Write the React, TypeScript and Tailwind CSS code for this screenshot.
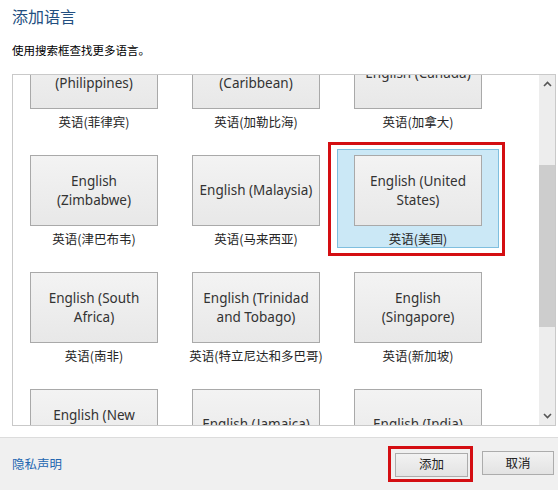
import React from "react";

type Lang = { lines: string[]; label: string; selected?: boolean };

const rows: Lang[][] = [
  [
    { lines: ["English", "(Philippines)"], label: "英语(菲律宾)" },
    { lines: ["English", "(Caribbean)"], label: "英语(加勒比海)" },
    { lines: ["English (Canada)"], label: "英语(加拿大)" },
  ],
  [
    { lines: ["English", "(Zimbabwe)"], label: "英语(津巴布韦)" },
    { lines: ["English (Malaysia)"], label: "英语(马来西亚)" },
    { lines: ["English (United", "States)"], label: "英语(美国)", selected: true },
  ],
  [
    { lines: ["English (South", "Africa)"], label: "英语(南非)" },
    { lines: ["English (Trinidad", "and Tobago)"], label: "英语(特立尼达和多巴哥)" },
    { lines: ["English", "(Singapore)"], label: "英语(新加坡)" },
  ],
  [
    { lines: ["English (New", "Zealand)"], label: "英语(新西兰)" },
    { lines: ["English (Jamaica)"], label: "英语(牙买加)" },
    { lines: ["English (India)"], label: "英语(印度)" },
  ],
];

const font = { fontFamily: '"Segoe UI", "Noto Sans", "Noto Sans CJK SC", sans-serif' };
const cjk = { fontFamily: '"Noto Sans CJK SC", sans-serif' };

const LangCell = ({ item }: { item: Lang }) => (
  <div
    className={
      "relative flex h-[99px] w-[162px] flex-col items-center pt-[5px] " +
      (item.selected ? "border border-[#7fbfdf] bg-[#cbe8f6] pt-[4px]" : "border border-transparent")
    }
  >
    <div className="flex h-[72px] w-[128px] flex-col items-center justify-center border border-[#a9a9a9] bg-gradient-to-b from-[#f3f3f3] to-[#e8e8e8] text-[13.5px] leading-[19px] text-[#333]">
      {item.lines.map((l) => (
        <span key={l}>{l}</span>
      ))}
    </div>
    <div className="pt-[5px] text-[12.5px] leading-[16px] text-[#262626]" style={cjk}>
      {item.label}
    </div>
    {item.selected && (
      <div className="pointer-events-none absolute left-[-10px] right-[-7px] top-[-8px] bottom-[-9px] border-[3px] border-[#d40e12]" />
    )}
  </div>
);

export default function App() {
  return (
    <div className="relative flex h-[490px] w-[558px] flex-col bg-white" style={font}>
      <h1 className="pl-3 pt-[5px] text-[16px] leading-[22px] text-[#234f80]" style={cjk}>
        添加语言
      </h1>
      <p className="pl-3 pt-[15px] text-[11.5px] leading-[16px] text-black" style={cjk}>
        使用搜索框查找更多语言。
      </p>

      <div className="ml-3 mt-[16px] flex h-[352px] w-[544px] border border-[#c9c9c9]">
        <div className="flex-1 overflow-hidden">
          <div className="mt-[-43px] flex flex-col gap-[18px]">
            {rows.map((r, i) => (
              <div key={i} className="flex">
                {r.map((item) => (
                  <LangCell key={item.label} item={item} />
                ))}
              </div>
            ))}
          </div>
        </div>
        <div className="flex w-[16px] flex-col bg-[#ededed]">
          <div className="flex h-[18px] items-center justify-center">
            <svg width="9" height="6" viewBox="0 0 9 6">
              <path d="M1 5 L4.5 1.5 L8 5" fill="none" stroke="#555" strokeWidth="1.6" />
            </svg>
          </div>
          <div className="mt-[72px] h-[162px] bg-[#cdcdcd]" />
          <div className="flex-1" />
          <div className="flex h-[18px] items-center justify-center">
            <svg width="9" height="6" viewBox="0 0 9 6">
              <path d="M1 1 L4.5 4.5 L8 1" fill="none" stroke="#555" strokeWidth="1.6" />
            </svg>
          </div>
        </div>
      </div>

      <div className="mt-[11px] flex flex-1 items-center justify-between border-t border-[#dcdcdc] bg-[#f0f0f0] pl-3 pr-[4px]">
        <a className="text-[12.5px] text-[#2366b0]" style={cjk}>
          隐私声明
        </a>
        <div className="flex gap-[14px]">
          <div className="relative">
            <button className="h-[24px] w-[73px] border border-[#acacac] bg-gradient-to-b from-[#f2f2f2] to-[#e3e3e3] text-[12.5px] text-[#222]" style={cjk}>
              添加
            </button>
            <div className="pointer-events-none absolute left-[-7px] right-[-5px] top-[-5px] bottom-[-5px] border-[3px] border-[#d40e12]" />
          </div>
          <button className="h-[24px] w-[72px] border border-[#acacac] bg-gradient-to-b from-[#f2f2f2] to-[#e3e3e3] text-[12.5px] text-[#222]" style={cjk}>
            取消
          </button>
        </div>
      </div>
    </div>
  );
}
